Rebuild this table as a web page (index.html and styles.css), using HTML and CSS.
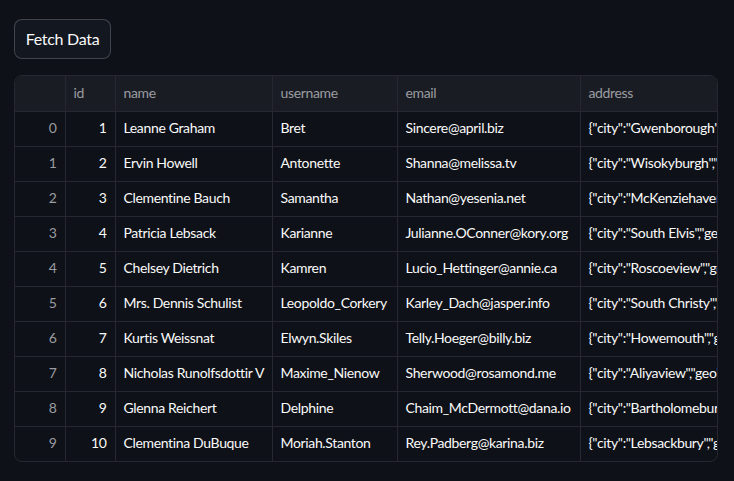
FILE: index.html
```html
<!DOCTYPE html>
<html>
<head>
<meta charset="utf-8">
<link rel="stylesheet" href="styles.css">
</head>
<body>
<main class="app">
  <button class="btn">Fetch Data</button>
  <div class="frame">
    <table class="grid">
      <colgroup>
        <col class="c-idx"><col class="c-id"><col class="c-name"><col class="c-user"><col class="c-email"><col class="c-addr">
      </colgroup>
      <thead>
        <tr><th></th><th>id</th><th>name</th><th>username</th><th>email</th><th>address</th></tr>
      </thead>
      <tbody>
        <tr><td class="idx">0</td><td class="num">1</td><td>Leanne Graham</td><td>Bret</td><td>Sincere@april.biz</td><td>{"city":"Gwenborough","geo":{"lat":"-37.3159","lng":"81.1496"}}</td></tr>
        <tr><td class="idx">1</td><td class="num">2</td><td>Ervin Howell</td><td>Antonette</td><td>Shanna@melissa.tv</td><td>{"city":"Wisokyburgh","geo":{"lat":"-43.9509","lng":"-34.4618"}}</td></tr>
        <tr><td class="idx">2</td><td class="num">3</td><td>Clementine Bauch</td><td>Samantha</td><td>Nathan@yesenia.net</td><td>{"city":"McKenziehaven","geo":{"lat":"-68.6102","lng":"-47.0653"}}</td></tr>
        <tr><td class="idx">3</td><td class="num">4</td><td>Patricia Lebsack</td><td>Karianne</td><td>Julianne.OConner@kory.org</td><td>{"city":"South Elvis","geo":{"lat":"29.4572","lng":"-164.2990"}}</td></tr>
        <tr><td class="idx">4</td><td class="num">5</td><td>Chelsey Dietrich</td><td>Kamren</td><td>Lucio_Hettinger@annie.ca</td><td>{"city":"Roscoeview","geo":{"lat":"-31.8129","lng":"62.5342"}}</td></tr>
        <tr><td class="idx">5</td><td class="num">6</td><td>Mrs. Dennis Schulist</td><td>Leopoldo_Corkery</td><td>Karley_Dach@jasper.info</td><td>{"city":"South Christy","geo":{"lat":"-71.4197","lng":"71.7478"}}</td></tr>
        <tr><td class="idx">6</td><td class="num">7</td><td>Kurtis Weissnat</td><td>Elwyn.Skiles</td><td>Telly.Hoeger@billy.biz</td><td>{"city":"Howemouth","geo":{"lat":"24.8918","lng":"21.8984"}}</td></tr>
        <tr><td class="idx">7</td><td class="num">8</td><td>Nicholas Runolfsdottir V</td><td>Maxime_Nienow</td><td>Sherwood@rosamond.me</td><td>{"city":"Aliyaview","geo":{"lat":"-14.3990","lng":"-120.7677"}}</td></tr>
        <tr><td class="idx">8</td><td class="num">9</td><td>Glenna Reichert</td><td>Delphine</td><td>Chaim_McDermott@dana.io</td><td>{"city":"Bartholomebury","geo":{"lat":"24.6463","lng":"-168.8889"}}</td></tr>
        <tr><td class="idx">9</td><td class="num">10</td><td>Clementina DuBuque</td><td>Moriah.Stanton</td><td>Rey.Padberg@karina.biz</td><td>{"city":"Lebsackbury","geo":{"lat":"-38.2386","lng":"57.2232"}}</td></tr>
      </tbody>
    </table>
  </div>
</main>
</body>
</html>
```
FILE: styles.css
```css
html, body {
  margin: 0;
  padding: 0;
  background: #0e1117;
  color: #fafafa;
  font-family: "Lato", "Noto Sans", sans-serif;
}
.app {
  padding: 19px 17px 20px 14px;
  display: flex;
  flex-direction: column;
  align-items: flex-start;
  gap: 16px;
}
.btn {
  font-family: inherit;
  font-size: 16px;
  letter-spacing: -0.3px;
  white-space: nowrap;
  color: #fafafa;
  background: #131720;
  border: 1px solid rgba(250, 250, 250, 0.2);
  border-radius: 8px;
  height: 40px;
  width: 97px;
  padding: 0 0 1px;
  cursor: pointer;
}
.frame {
  width: 704px;
  box-sizing: border-box;
  border: 1px solid #262730;
  border-radius: 8px;
  overflow: hidden;
}
.grid {
  border-collapse: collapse;
  table-layout: fixed;
  width: 865px;
  font-size: 14px;
  letter-spacing: -0.35px;
}
.c-idx { width: 50px; }
.c-id { width: 50px; }
.c-name { width: 157px; }
.c-user { width: 125px; }
.c-email { width: 183px; }
.c-addr { width: 300px; }
.grid th, .grid td {
  box-sizing: border-box;
  padding: 0 8px 2px;
  border-right: 1px solid #262730;
  border-bottom: 1px solid #262730;
  white-space: nowrap;
  overflow: hidden;
  text-align: left;
}
.grid th {
  height: 35px;
  padding-bottom: 1px;
  background: #1a1c24;
  color: #9b9ca1;
  font-weight: 400;
}
.grid td {
  height: 35px;
}
.grid tbody tr:last-child td {
  border-bottom: none;
}
.grid td.idx {
  color: #9b9ca1;
  text-align: right;
}
.grid td.num {
  text-align: right;
}
```
